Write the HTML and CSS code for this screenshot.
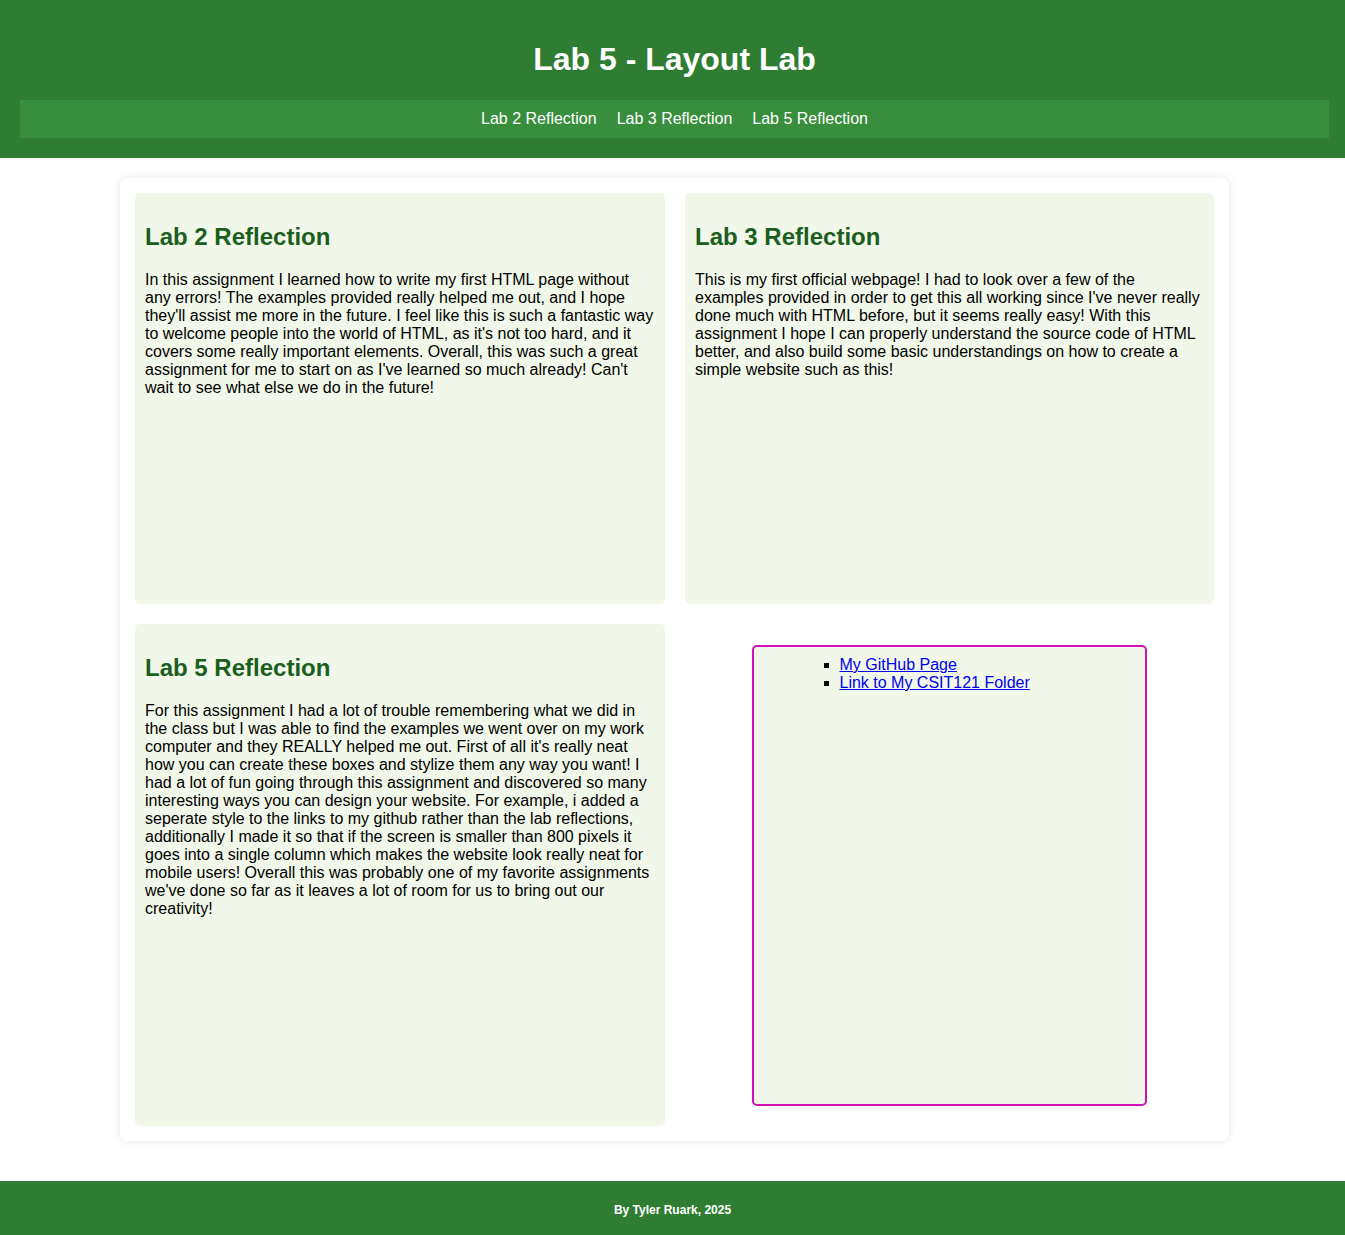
FILE: index.html
```html
<!DOCTYPE html>
<html lang="en">
<head>
<meta charset="utf-8">
<title>Lab 5 - Layout Lab</title>
<link rel="stylesheet" href="styles.css">
</head>
<body>
<header class="site-header">
  <h1 class="site-title">Lab 5 - Layout Lab</h1>
  <nav class="site-nav">
    <a href="#lab2">Lab 2 Reflection</a>
    <a href="#lab3">Lab 3 Reflection</a>
    <a href="#lab5">Lab 5 Reflection</a>
  </nav>
</header>
<main class="container">
  <section class="card" id="lab2">
    <h2>Lab 2 Reflection</h2>
    <p>In this assignment I learned how to write my first HTML page without any errors! The examples provided really helped me out, and I hope they'll assist me more in the future. I feel like this is such a fantastic way to welcome people into the world of HTML, as it's not too hard, and it covers some really important elements. Overall, this was such a great assignment for me to start on as I've learned so much already! Can't wait to see what else we do in the future!</p>
  </section>
  <section class="card" id="lab3">
    <h2>Lab 3 Reflection</h2>
    <p>This is my first official webpage! I had to look over a few of the examples provided in order to get this all working since I've never really done much with HTML before, but it seems really easy! With this assignment I hope I can properly understand the source code of HTML better, and also build some basic understandings on how to create a simple website such as this!</p>
  </section>
  <section class="card" id="lab5">
    <h2>Lab 5 Reflection</h2>
    <p>For this assignment I had a lot of trouble remembering what we did in the class but I was able to find the examples we went over on my work computer and they REALLY helped me out. First of all it's really neat how you can create these boxes and stylize them any way you want! I had a lot of fun going through this assignment and discovered so many interesting ways you can design your website. For example, i added a seperate style to the links to my github rather than the lab reflections, additionally I made it so that if the screen is smaller than 800 pixels it goes into a single column which makes the website look really neat for mobile users! Overall this was probably one of my favorite assignments we've done so far as it leaves a lot of room for us to bring out our creativity!</p>
  </section>
  <div class="links-cell">
    <div class="links-box">
      <ul class="links-list">
        <li><a href="#">My GitHub Page</a></li>
        <li><a href="#">Link to My CSIT121 Folder</a></li>
      </ul>
    </div>
  </div>
</main>
<footer class="site-footer">
  <p>By Tyler Ruark, 2025</p>
</footer>
</body>
</html>
```

FILE: styles.css
```css
html, body {
  margin: 0;
  padding: 0;
}
body {
  font-family: "Liberation Sans", Arial, sans-serif;
  background: #ffffff;
  color: #000000;
}
.site-header {
  background: #2e7d32;
  color: #ffffff;
  padding: 20px 16px 20px 20px;
  text-align: center;
}
.site-title {
  margin: 21px 0 22px;
  font-size: 32px;
  line-height: 37px;
  font-weight: bold;
}
.site-nav {
  background: #388e3c;
  padding: 10px 0;
  line-height: 18px;
  display: flex;
  justify-content: center;
  gap: 20px;
}
.site-nav a {
  color: #ffffff;
  text-decoration: none;
  font-size: 16px;
}
.container {
  width: 1079px;
  margin: 20px 0 40px 120px;
  padding: 15px;
  background: #ffffff;
  border-radius: 8px;
  box-shadow: 0 0 10px rgba(0, 0, 0, 0.1);
  display: grid;
  grid-template-columns: 530px 529px;
  column-gap: 20px;
  row-gap: 20px;
}
.card {
  background: #f1f8e9;
  border-radius: 5px;
  padding: 10px;
  min-height: 391px;
}
.card h2 {
  color: #1b5e20;
  font-size: 24px;
  line-height: 28px;
  margin: 20px 0;
}
.card p {
  margin: 0;
  font-size: 16px;
  line-height: 18px;
}
.links-cell {
  padding: 21px 0 20px;
  display: flex;
  justify-content: center;
}
.links-box {
  box-sizing: border-box;
  width: 395px;
  height: 461px;
  border: 2px solid #d012b8;
  border-radius: 5px;
  background: #f1f8e9;
  padding: 9px 0 0 46px;
  margin-left: -1px;
}
.links-list {
  margin: 0;
  padding-left: 40px;
  list-style: square;
  font-size: 16px;
  line-height: 18px;
}
.links-list a {
  color: #0000ee;
}
.site-footer {
  background: #2e7d32;
  color: #ffffff;
  text-align: center;
  padding: 22px 20px 20px;
}
.site-footer p {
  margin: 0;
  font-size: 12px;
  line-height: 14px;
  font-weight: bold;
}
```
